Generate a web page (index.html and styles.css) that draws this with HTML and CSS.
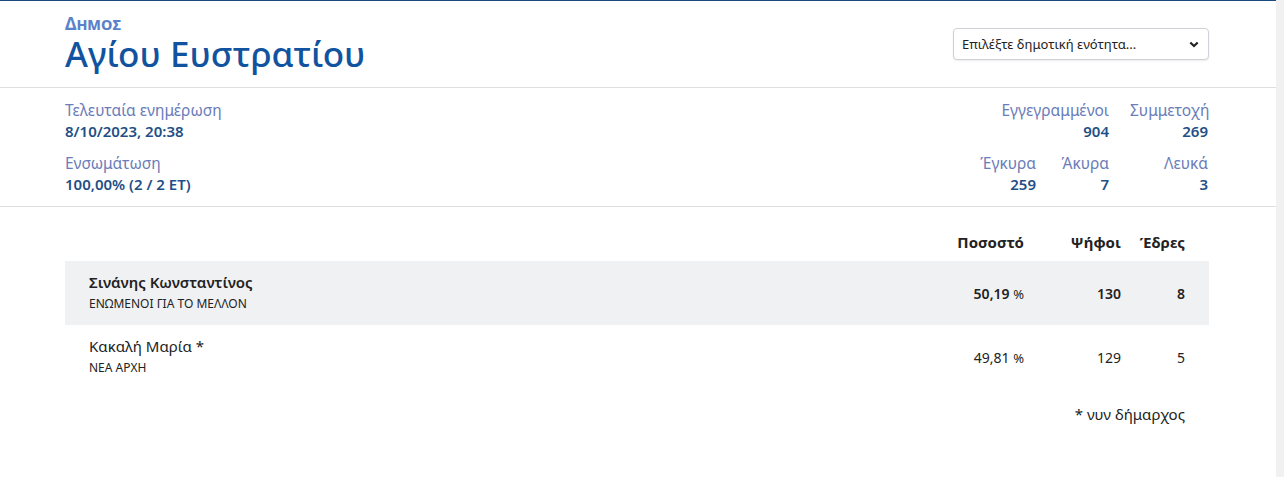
FILE: index.html
```html
<!DOCTYPE html>
<html lang="el">
<head>
<meta charset="utf-8">
<title>Αγίου Ευστρατίου</title>
<link rel="stylesheet" href="styles.css">
</head>
<body>
<div class="screen">
  <div class="page">
    <header class="hdr">
      <div class="wrap hdr-inner">
        <div class="titles">
          <div class="kicker">Δημος</div>
          <h1 class="title">Αγίου Ευστρατίου</h1>
        </div>
        <div class="select-box">
          <select class="select">
            <option>Επιλέξτε δημοτική ενότητα...</option>
          </select>
          <svg class="chev" width="10" height="7" viewBox="0 0 10 7"><path d="M1.3 1.4 L5 5.1 L8.7 1.4" fill="none" stroke="#222" stroke-width="2.1"/></svg>
        </div>
      </div>
    </header>

    <section class="stats">
      <div class="wrap stats-inner">
        <div class="stats-left">
          <div class="stat">
            <div class="lbl">Τελευταία ενημέρωση</div>
            <div class="val">8/10/2023, 20:38</div>
          </div>
          <div class="stat">
            <div class="lbl">Ενσωμάτωση</div>
            <div class="val">100,00% (2 / 2 ΕΤ)</div>
          </div>
        </div>
        <div class="stats-right">
          <div class="stat num span2">
            <div class="lbl">Εγγεγραμμένοι</div>
            <div class="val">904</div>
          </div>
          <div class="stat num">
            <div class="lbl">Συμμετοχή</div>
            <div class="val">269</div>
          </div>
          <div class="stat num">
            <div class="lbl">Έγκυρα</div>
            <div class="val">259</div>
          </div>
          <div class="stat num">
            <div class="lbl">Άκυρα</div>
            <div class="val">7</div>
          </div>
          <div class="stat num">
            <div class="lbl">Λευκά</div>
            <div class="val">3</div>
          </div>
        </div>
      </div>
    </section>

    <section class="results">
      <div class="wrap">
        <div class="row head">
          <div></div>
          <div class="c">Ποσοστό</div>
          <div class="c">Ψήφοι</div>
          <div class="c">Έδρες</div>
        </div>
        <div class="row cand win">
          <div class="who">
            <div class="name">Σινάνης Κωνσταντίνος</div>
            <div class="party">ΕΝΩΜΕΝΟΙ ΓΙΑ ΤΟ ΜΕΛΛΟΝ</div>
          </div>
          <div class="c">50,19 <span class="pct">%</span></div>
          <div class="c">130</div>
          <div class="c">8</div>
        </div>
        <div class="row cand">
          <div class="who">
            <div class="name">Κακαλή Μαρία *</div>
            <div class="party">ΝΕΑ ΑΡΧΗ</div>
          </div>
          <div class="c">49,81 <span class="pct">%</span></div>
          <div class="c">129</div>
          <div class="c">5</div>
        </div>
        <div class="note">* νυν δήμαρχος</div>
      </div>
    </section>
  </div>
  <div class="scroll"></div>
</div>
</body>
</html>
```
FILE: styles.css
```css
html, body {
  margin: 0;
  padding: 0;
  background: #fff;
}
body {
  font-family: "Noto Sans", "Open Sans", "DejaVu Sans", sans-serif;
  color: #222;
}
.screen {
  display: flex;
  height: 477px;
  overflow: hidden;
}
.page {
  flex: 1;
  border-top: 1px solid #1b4b7d;
}
.scroll {
  width: 8px;
  background: #f1f1f1;
}
.wrap {
  width: 1144px;
  margin: 0 67px 0 65px;
}

/* header */
.hdr {
  border-bottom: 1px solid #dedede;
}
.hdr-inner {
  display: flex;
  justify-content: space-between;
  align-items: center;
  padding: 13px 0 13px;
}
.kicker {
  font-size: 17px;
  line-height: 19px;
  font-weight: 700;
  font-variant: small-caps;
  color: #5b82c9;
}
.title {
  margin: 1px 0 0;
  font-size: 35px;
  line-height: 40px;
  font-weight: 500;
  color: #12539f;
}
.select-box {
  position: relative;
  width: 256px;
  height: 32px;
  margin-top: -1px;
}
.select {
  appearance: none;
  -webkit-appearance: none;
  width: 100%;
  height: 100%;
  box-sizing: border-box;
  border: 1px solid #cfd2d6;
  border-radius: 4px;
  background: #fff;
  box-shadow: 0 1px 2px rgba(0,0,0,0.08);
  padding: 0 24px 0 8px;
  font-family: "Noto Sans", "Open Sans", sans-serif;
  font-size: 13px;
  color: #222;
}
.chev {
  position: absolute;
  right: 10px;
  top: 13px;
  pointer-events: none;
}

/* stats */
.stats {
  border-bottom: 1px solid #dedede;
}
.stats-inner {
  display: flex;
  justify-content: space-between;
  padding: 12px 0 11px;
}
.stats-left {
  display: flex;
  flex-direction: column;
  gap: 11px;
}
.lbl {
  font-size: 15.5px;
  line-height: 21px;
  color: #6a7db8;
}
.val {
  font-size: 15px;
  line-height: 21px;
  font-weight: 600;
  color: #1f4f86;
}
.stats-right {
  display: grid;
  grid-template-columns: auto minmax(52px, auto) 78px;
  column-gap: 21px;
  row-gap: 11px;
  padding-right: 1px;
}
.stat.num {
  text-align: right;
}
.span2 {
  grid-column: 1 / 3;
}

/* results */
.results {
  padding-top: 20px;
}
.row {
  display: grid;
  grid-template-columns: 1fr 100px 97px 64px;
  align-items: center;
  padding: 0 24px;
  font-size: 14px;
}
.row .c {
  text-align: right;
}
.head {
  height: 34px;
  font-weight: 700;
  font-size: 15px;
  align-items: start;
}
.head .c {
  line-height: 30px;
}
.cand {
  height: 64px;
}
.win {
  background: #f0f1f3;
  font-weight: 600;
}
.pct {
  font-weight: 400;
  font-size: 13px;
}
.name {
  font-size: 15px;
  line-height: 21px;
}
.party {
  font-size: 12px;
  line-height: 21px;
  font-weight: 400;
}
.note {
  text-align: right;
  padding: 14px 24px 0 0;
  font-size: 15px;
  line-height: 22px;
}
```
